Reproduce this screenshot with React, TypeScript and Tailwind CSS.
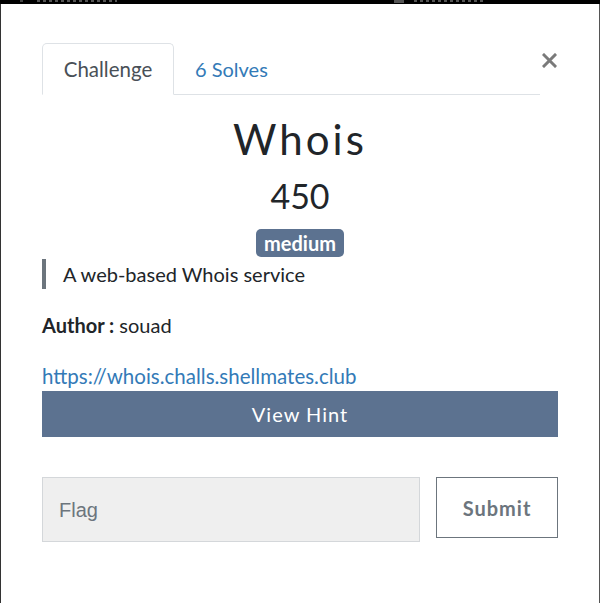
import React from 'react';

const font = { fontFamily: 'Lato, "Noto Sans", sans-serif' };

export default function App() {
  return (
    <div className="w-[600px] h-[603px] overflow-hidden bg-black" style={font}>
      {/* backdrop strip behind the modal (bottoms of navbar glyphs) */}
      <div className="h-[4px] flex items-start px-[20px] gap-[4px]">
        <div className="w-[3px] h-[2px] bg-[#444]" />
        <div className="ml-[10px] w-[80px] h-[2px] bg-[repeating-linear-gradient(90deg,#555_0_3px,transparent_3px_6px)]" />
        <div className="ml-auto w-[10px] h-[3px] bg-[#555]" />
        <div className="ml-[6px] mr-[96px] w-[70px] h-[2px] bg-[repeating-linear-gradient(90deg,#555_0_3px,transparent_3px_6px)]" />
      </div>

      {/* modal */}
      <div className="h-[599px] bg-white border-l border-r border-l-[#333] border-r-[#555] pl-[41px] pr-[41px]">
        {/* header: tabs + close */}
        <div className="flex items-start pt-[39px]">
          <div className="w-[498px] flex border-b border-[#dee2e6] h-[52px]">
            <div className="w-[132px] h-[52px] border border-[#dee2e6] border-b-white rounded-t-[5px] flex items-center justify-center text-[20.5px] text-[#495057] bg-white">
              Challenge
            </div>
            <div className="h-[52px] px-[21px] flex items-center text-[20px] text-[#337ab7]">6 Solves</div>
          </div>
          <button className="ml-auto mt-[10px] mr-[1px] w-[15px] h-[15px]">
            <svg width="15" height="15" viewBox="0 0 15 15">
              <path d="M2 2 L13 13 M13 2 L2 13" stroke="#7a7a7a" strokeWidth="3" strokeLinecap="square" />
            </svg>
          </button>
        </div>

        {/* title + value */}
        <h2 className="mt-[19px] text-center text-[42px] leading-[50px] tracking-[3px] text-[#212529]">Whois</h2>
        <h3 className="mt-[12px] text-center text-[34px] leading-[40px] text-[#212529]">450</h3>
        <div className="mt-[13px] flex justify-center">
          <span className="h-[28px] px-[8px] rounded-[5px] bg-[#5c7290] text-white font-bold text-[20px] leading-[28px]">
            medium
          </span>
        </div>

        {/* description */}
        <div className="mt-[2px] border-l-4 border-[#6c757d] pl-[17px] text-[20px] leading-[30px] text-[#212529]">
          A web-based Whois service
        </div>
        <p className="mt-[24px] text-[20px] leading-[24px] text-[#212529]">
          <span className="font-bold">Author :</span> souad
        </p>
        <a className="block mt-[27px] text-[20.5px] leading-[24px] text-[#337ab7]">https://whois.challs.shellmates.club</a>

        <button className="mt-[3px] w-full h-[46px] bg-[#5c7290] text-white text-[20px] tracking-[1px]">View Hint</button>

        {/* flag form */}
        <div className="mt-[40px] flex items-start gap-[16px]">
          <div
            className="w-[378px] h-[65px] bg-[#efefef] border border-[#d4d7da] pl-[16px] flex items-center text-[20px] text-[#6c757d]"
            style={{ fontFamily: '"Liberation Sans", Arial, sans-serif' }}
          >
            Flag
          </div>
          <button className="w-[122px] h-[61px] border border-[#6c757d] bg-white text-[#6c757d] font-bold text-[20px] tracking-[1px]">
            Submit
          </button>
        </div>
      </div>
    </div>
  );
}
